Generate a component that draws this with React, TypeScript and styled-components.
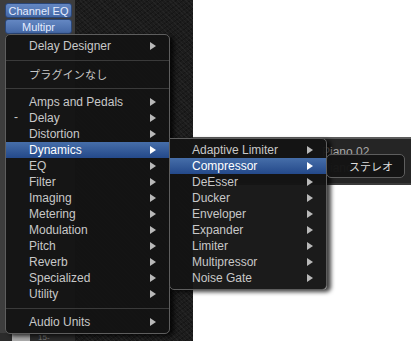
import React from "react";
import styled, { createGlobalStyle } from "styled-components";

const GlobalStyle = createGlobalStyle`
  html, body {
    margin: 0;
    padding: 0;
    background: #ffffff;
  }
`;

const Screen = styled.div`
  position: relative;
  width: 411px;
  height: 341px;
  overflow: hidden;
  display: flex;
  font-family: "Liberation Sans", Arial, "Noto Sans CJK JP", sans-serif;
  font-size: 12px;
`;

const ChannelStrip = styled.div`
  width: 76px;
  flex-shrink: 0;
  box-sizing: border-box;
  display: flex;
  flex-direction: column;
  gap: 1px;
  padding: 3px 3px 0 5px;
  background: #3d3d3d;
  border-right: 1px solid #1b1b1b;
`;

const InsertButton = styled.div`
  height: 15px;
  box-sizing: border-box;
  display: flex;
  align-items: center;
  justify-content: center;
  white-space: nowrap;
  border-radius: 3px;
  border: 1px solid #2a4677;
  background: linear-gradient(#6487c2, #4468a6);
  color: #e4ecff;
  font-size: 11px;
`;

const StripFill = styled.div`
  flex: 1;
`;

const MeterRow = styled.div`
  height: 8px;
  display: flex;
  align-items: center;
  gap: 8px;
  margin: 0 -3px 0 -5px;
  padding-left: 12px;
  background: #2b2b2b;
`;

const MeterBlock = styled.div`
  width: 18px;
  height: 8px;
  background: #a9a9a9;
`;

const MeterLabel = styled.span`
  font-size: 8px;
  color: #777;
`;

const TexturePanel = styled.div`
  width: 117px;
  flex-shrink: 0;
  background-color: #1c1c1c;
  background-image: repeating-linear-gradient(
      45deg,
      rgba(255, 255, 255, 0.035) 0 1px,
      transparent 1px 3px
    ),
    repeating-linear-gradient(
      -35deg,
      rgba(0, 0, 0, 0.25) 0 1px,
      transparent 1px 4px
    );
`;

const Workspace = styled.div`
  flex: 1;
  min-width: 0;
  display: flex;
  flex-direction: column;
`;

const WhiteArea = styled.div<{ $height?: number }>`
  background: #ffffff;
  ${({ $height }) => ($height ? `height: ${$height}px;` : "flex: 1;")}
`;

const TrackStrip = styled.div`
  height: 48px;
  box-sizing: border-box;
  display: flex;
  flex-direction: column;
  padding: 5px 0 0 129px;
  background: #252525;
  border-top: 2px solid #5c5c5c;
  border-bottom: 2px solid #3a3a3a;
`;

const TrackName = styled.div`
  height: 16px;
  line-height: 16px;
  color: #a8a8a8;
  white-space: nowrap;
`;

const MenuPanel = styled.div<{ $left: number; $top: number; $width: number; $squareTop?: boolean }>`
  position: absolute;
  left: ${({ $left }) => $left}px;
  top: ${({ $top }) => $top}px;
  width: ${({ $width }) => $width}px;
  box-sizing: border-box;
  padding: 3px 0;
  background: rgba(20, 20, 20, 0.97);
  border: 1px solid #5e5e5e;
  border-radius: ${({ $squareTop }) => ($squareTop ? "0 5px 5px 5px" : "5px")};
  box-shadow: 4px 2px 4px rgba(0, 0, 0, 0.75);
`;

const MenuRow = styled.div<{ $active?: boolean; $indent: number }>`
  height: 16px;
  display: flex;
  align-items: center;
  padding: 0 13px 0 ${({ $indent }) => $indent}px;
  color: ${({ $active }) => ($active ? "#ffffff" : "#c8c8c8")};
  background: ${({ $active }) =>
    $active ? "linear-gradient(#466ea9, #24498a)" : "transparent"};
`;

const Mark = styled.span`
  position: absolute;
  left: 8px;
  color: #c8c8c8;
`;

const Label = styled.span`
  flex: 1;
  white-space: nowrap;
`;

const JapaneseLabel = styled(Label)`
  font-family: "Noto Sans CJK JP", sans-serif;
  font-size: 11px;
  letter-spacing: 0.2px;
`;

const Arrow = styled.span<{ $active?: boolean }>`
  width: 0;
  height: 0;
  border-top: 4px solid transparent;
  border-bottom: 4px solid transparent;
  border-left: 6px solid ${({ $active }) => ($active ? "#ffffff" : "#b9b9b9")};
`;

const Separator = styled.div`
  height: 12px;
  display: flex;
  align-items: center;

  &::after {
    content: "";
    flex: 1;
    height: 1px;
    background: #3a3a3a;
  }
`;

const RowWrap = styled.div`
  position: relative;
`;

const ChannelPopup = styled.div`
  position: absolute;
  left: 326px;
  top: 154px;
  width: 79px;
  height: 24px;
  box-sizing: border-box;
  display: flex;
  align-items: center;
  justify-content: flex-end;
  padding-right: 11px;
  background: rgba(20, 20, 20, 0.97);
  border: 1px solid #5e5e5e;
  border-radius: 5px;
  color: #dedede;
  font-family: "Noto Sans CJK JP", sans-serif;
  font-size: 11px;
`;

type Entry = { label: string; arrow?: boolean; active?: boolean; mark?: string } | "sep";

const mainItems: Entry[] = [
  { label: "Delay Designer", arrow: true },
  "sep",
  { label: "プラグインなし" },
  "sep",
  { label: "Amps and Pedals", arrow: true },
  { label: "Delay", arrow: true, mark: "-" },
  { label: "Distortion", arrow: true },
  { label: "Dynamics", arrow: true, active: true },
  { label: "EQ", arrow: true },
  { label: "Filter", arrow: true },
  { label: "Imaging", arrow: true },
  { label: "Metering", arrow: true },
  { label: "Modulation", arrow: true },
  { label: "Pitch", arrow: true },
  { label: "Reverb", arrow: true },
  { label: "Specialized", arrow: true },
  { label: "Utility", arrow: true },
  "sep",
  { label: "Audio Units", arrow: true },
];

const dynamicsItems: Entry[] = [
  { label: "Adaptive Limiter", arrow: true },
  { label: "Compressor", arrow: true, active: true },
  { label: "DeEsser", arrow: true },
  { label: "Ducker", arrow: true },
  { label: "Enveloper", arrow: true },
  { label: "Expander", arrow: true },
  { label: "Limiter", arrow: true },
  { label: "Multipressor", arrow: true },
  { label: "Noise Gate", arrow: true },
];

const isJapanese = (s: string) => /[\u3040-\u30ff]/.test(s);

const Menu = ({
  items,
  indent,
  ...pos
}: {
  items: Entry[];
  indent: number;
  $left: number;
  $top: number;
  $width: number;
  $squareTop?: boolean;
}) => (
  <MenuPanel {...pos}>
    {items.map((item, i) => {
      if (item === "sep") return <Separator key={i} />;
      const Text = isJapanese(item.label) ? JapaneseLabel : Label;
      return (
        <RowWrap key={i}>
          {item.mark && <Mark>{item.mark}</Mark>}
          <MenuRow $active={item.active} $indent={indent}>
            <Text>{item.label}</Text>
            {item.arrow && <Arrow $active={item.active} />}
          </MenuRow>
        </RowWrap>
      );
    })}
  </MenuPanel>
);

const App = () => {
  return (
    <>
      <GlobalStyle />
      <Screen>
        <ChannelStrip>
          <InsertButton>Channel EQ</InsertButton>
          <InsertButton>Multipr</InsertButton>
          <StripFill />
          <MeterRow>
            <MeterBlock />
            <MeterLabel>15-</MeterLabel>
          </MeterRow>
        </ChannelStrip>
        <TexturePanel />
        <Workspace>
          <WhiteArea $height={137} />
          <TrackStrip>
            <TrackName>Piano 02</TrackName>
            <TrackName>Piano 03</TrackName>
          </TrackStrip>
          <WhiteArea />
        </Workspace>

        <Menu items={mainItems} indent={23} $left={5} $top={34} $width={165} />
        <Menu
          items={dynamicsItems}
          indent={22}
          $left={169}
          $top={138}
          $width={158}
          $squareTop
        />
        <ChannelPopup>ステレオ</ChannelPopup>
      </Screen>
    </>
  );
};

export default App;
